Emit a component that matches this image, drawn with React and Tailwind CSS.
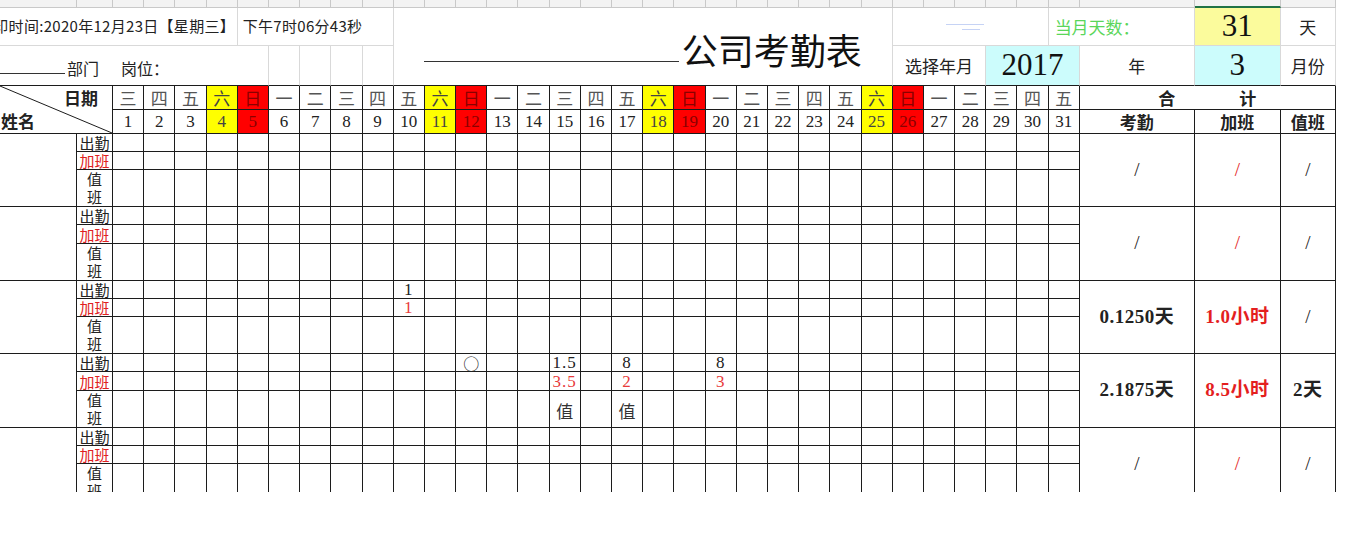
import React from "react";

const WEEK = ["一", "二", "三", "四", "五", "六", "日"];
const DAYS = Array.from({ length: 31 }, (_, i) => i + 1);
const serif = "font-['Liberation_Serif','Noto_Sans_CJK_SC',serif]";
const cjk = "font-['Noto_Sans_CJK_SC',sans-serif]";
const grid = "border-r border-b border-[#1c1c1c]";
const light = "border-r border-b border-[#d9d9d9]";
const lightTop = "border-r border-r-[#d9d9d9] border-b border-b-[#1c1c1c]";

// 2017年3月, 1号是星期三
const weekday = (d) => (d + 1) % 7;

const tone = (d) => {
  if (weekday(d) === 5) return "bg-[#ffff00] text-[#444]";
  if (weekday(d) === 6) return "bg-[#ff0000] text-[#8a0000]";
  return "";
};

const slash = ["/", "/", "/"];

const groups = [
  { att: {}, ot: {}, duty: {}, tot: slash, bold: false },
  { att: {}, ot: {}, duty: {}, tot: slash, bold: false },
  { att: { 10: "1" }, ot: { 10: "1" }, duty: {}, tot: ["0.1250天", "1.0小时", "/"], bold: true },
  {
    att: { 12: "○", 15: "1.5", 17: "8", 20: "8" },
    ot: { 15: "3.5", 17: "2", 20: "3" },
    duty: { 15: "值", 17: "值" },
    tot: ["2.1875天", "8.5小时", "2天"],
    bold: true,
  },
  { att: {}, ot: {}, duty: {}, tot: slash, bold: false },
];

function Total({ value, red, bold }) {
  const isSlash = value === "/";
  return (
    <div
      className={`row-span-3 flex items-center justify-center ${grid} ${serif} ${
        red ? "text-[#e41f1f]" : "text-[#222]"
      } ${isSlash ? "text-[19px]" : bold ? "text-[19px] font-bold tracking-[0.5px]" : "text-[19px]"}`}
    >
      {value}
    </div>
  );
}

function Value({ v, className }) {
  if (v === "○") {
    return <span className={`text-[16px] leading-none text-[#222] ${cjk}`}>○</span>;
  }
  return <span className={className}>{v}</span>;
}

export default function App() {
  return (
    <div className="w-[1362px] h-[538px] bg-white overflow-hidden text-[#222] font-['Noto_Sans_CJK_SC',sans-serif]">
      <div className="h-[492px] overflow-hidden">
        <div className="grid w-[1336px] grid-cols-[77px_36px_repeat(31,31.2px)_115px_86px_55px] grid-rows-[8px_38px_40px_24px_24px_repeat(2,18px_18px_37px_18px_19px_37px)_18px_18px_37px]">
          {/* strip left over from the row above */}
          {Array.from({ length: 36 }, (_, i) => (
            <div
              key={`s${i}`}
              className={
                i === 34
                  ? "bg-[#f3f3f3] border-r border-[#c9c9c9] border-b-2 border-b-[#217346]"
                  : "bg-[#f3f3f3] border-r border-b border-[#c9c9c9]"
              }
            />
          ))}

          {/* row 1 */}
          <div className={`col-span-6 flex items-center overflow-hidden whitespace-nowrap text-[15px] tracking-[0.3px] ${light}`}>
            <span className="ml-[-22px]">打印时间:2020年12月23日【星期三】</span>
          </div>
          <div className={`col-span-5 flex items-center whitespace-nowrap pl-[5px] text-[15px] tracking-[0.3px] ${light}`}>
            下午7时06分43秒
          </div>
          <div className={`col-span-16 row-span-2 flex items-end justify-center ${lightTop}`}>
            <span className="mb-[23px] h-px w-[255px] bg-[#333]" />
            <span className="mb-[18px] ml-[3px] text-[36px] leading-none text-[#111]">公司考勤表</span>
          </div>
          <div className={`col-span-5 flex flex-col items-end justify-center gap-[4px] pr-[64px] ${light}`}>
            <span className="h-px w-[38px] bg-[#c6d3f5]" />
            <span className="mr-[4px] h-px w-[18px] bg-[#c6d3f5]" />
          </div>
          <div className={`col-span-2 flex items-center pl-[6px] text-[17px] text-[#5ad65a] ${light}`}>
            当月天数：
          </div>
          <div className={`flex items-center justify-center bg-[#fbfb9c] text-[31px] text-[#111] ${serif} ${light}`}>
            31
          </div>
          <div className={`flex items-center justify-center text-[17px] ${light}`}>天</div>

          {/* row 2 */}
          <div className={`col-span-7 flex items-center whitespace-nowrap pt-[4px] text-[16px] ${lightTop}`}>
            <span className="mb-[2px] h-px w-[65px] self-end bg-[#333] translate-y-[-9px]" />
            <span className="ml-[2px]">部门</span>
            <span className="ml-[22px]">岗位：</span>
          </div>
          {[6, 7, 8, 9].map((d) => (
            <div key={`e${d}`} className={lightTop} />
          ))}
          <div className={`col-span-3 flex items-center justify-center text-[17px] ${lightTop}`}>选择年月</div>
          <div className={`col-span-3 flex items-center justify-center bg-[#ccfcfc] text-[31px] text-[#111] ${serif} ${lightTop}`}>
            2017
          </div>
          <div className={`flex items-center justify-center text-[17px] ${lightTop}`}>年</div>
          <div className={`flex items-center justify-center bg-[#ccfcfc] text-[31px] text-[#111] ${serif} ${lightTop}`}>
            3
          </div>
          <div className={`flex items-center justify-center text-[17px] ${lightTop}`}>月份</div>

          {/* header */}
          <div className={`relative col-span-2 row-span-2 flex flex-col justify-between py-[2px] text-[17px] font-bold ${grid}`}>
            <svg className="absolute inset-0 h-full w-full" preserveAspectRatio="none" viewBox="0 0 100 100">
              <line x1="0" y1="0" x2="100" y2="100" stroke="#1c1c1c" strokeWidth="1" vectorEffect="non-scaling-stroke" />
            </svg>
            <span className="pr-[14px] text-right leading-[20px]">日期</span>
            <span className="pl-[1px] leading-[20px]">姓名</span>
          </div>
          {DAYS.map((d) => (
            <div
              key={`w${d}`}
              className={`flex items-center justify-center text-[17px] ${grid} ${tone(d) || "text-[#555]"}`}
            >
              {WEEK[weekday(d)]}
            </div>
          ))}
          <div className={`col-span-3 flex items-center justify-center gap-[64px] text-[17px] font-bold ${grid}`}>
            <span>合</span>
            <span>计</span>
          </div>
          {DAYS.map((d) => (
            <div
              key={`n${d}`}
              className={`flex items-center justify-center text-[17px] ${serif} ${grid} ${tone(d) || "text-[#222]"}`}
            >
              {d}
            </div>
          ))}
          <div className={`flex items-center justify-center text-[17px] font-bold ${grid}`}>考勤</div>
          <div className={`flex items-center justify-center text-[17px] font-bold ${grid}`}>加班</div>
          <div className={`flex items-center justify-center text-[17px] font-bold ${grid}`}>值班</div>

          {/* employees */}
          {groups.map((g, gi) => (
            <React.Fragment key={`g${gi}`}>
              <div className={`row-span-3 ${grid}`} />
              <div className={`flex items-center justify-center text-[15px] leading-[17px] ${grid}`}>出勤</div>
              {DAYS.map((d) => (
                <div key={`a${d}`} className={`flex items-center justify-center text-[17px] leading-[17px] ${serif} ${grid}`}>
                  <Value v={g.att[d]} className="tracking-[1px]" />
                </div>
              ))}
              <Total value={g.tot[0]} bold={g.bold} />
              <Total value={g.tot[1]} bold={g.bold} red />
              <Total value={g.tot[2]} bold={g.bold} />

              <div className={`flex items-center justify-center text-[15px] leading-[17px] text-[#e02020] ${grid}`}>加班</div>
              {DAYS.map((d) => (
                <div
                  key={`o${d}`}
                  className={`flex items-center justify-center text-[17px] leading-[17px] text-[#e83a3a] ${serif} ${grid}`}
                >
                  <Value v={g.ot[d]} className="tracking-[1px]" />
                </div>
              ))}

              <div className={`flex flex-col items-center text-[15px] leading-[18px] ${grid}`}>
                <span>值</span>
                <span>班</span>
              </div>
              {DAYS.map((d) => (
                <div key={`v${d}`} className={`flex items-center justify-center pt-[4px] text-[17px] text-[#333] ${grid}`}>
                  {g.duty[d]}
                </div>
              ))}
            </React.Fragment>
          ))}
        </div>
      </div>
    </div>
  );
}
